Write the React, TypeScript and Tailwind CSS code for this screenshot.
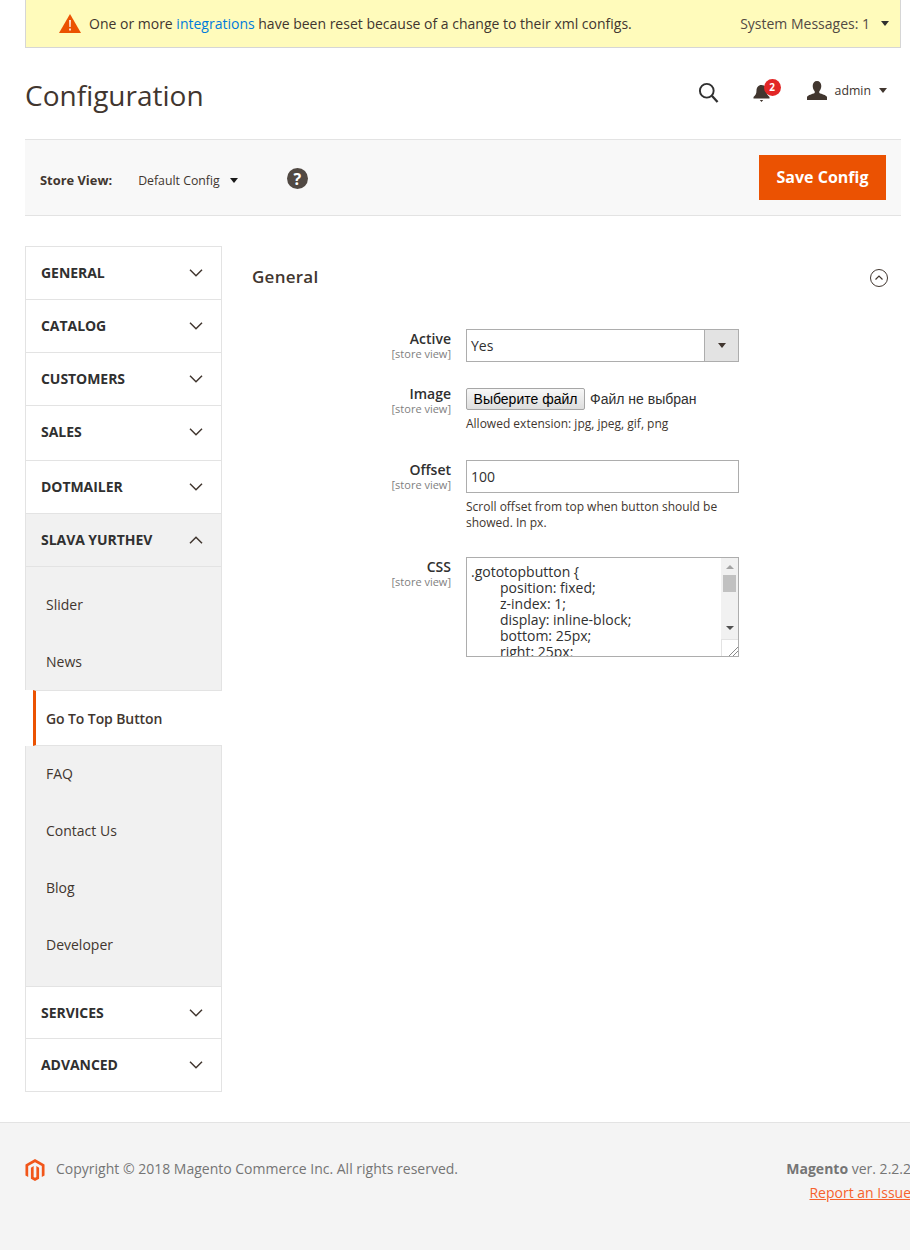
import React from 'react';

const font = "font-['Open_Sans',sans-serif]";

function Chevron({ up = false }: { up?: boolean }) {
  return (
    <svg width="14" height="8" viewBox="0 0 14 8" fill="none" stroke="#41362f" strokeWidth="1.5">
      <path d={up ? 'M1 7.3 7 1.3l6 6' : 'M1 .7l6 6 6-6'} />
    </svg>
  );
}

function Caret({ color = '#41362f' }: { color?: string }) {
  return (
    <svg width="8" height="5" viewBox="0 0 8 5">
      <path d="M0 0h8L4 5z" fill={color} />
    </svg>
  );
}

function NavSection({ title, h, open = false }: { title: string; h: string; open?: boolean }) {
  return (
    <div className={`flex items-center justify-between border-b border-[#e3e3e3] pl-[15px] pr-[18px] ${h} ${open ? 'bg-[#f1f1f1]' : 'bg-white'}`}>
      <span className="mb-[2px] text-[14px] font-bold tracking-[-0.05px] text-[#303030]">{title}</span>
      <Chevron up={open} />
    </div>
  );
}

function SubItem({ label, h }: { label: string; h: string }) {
  return <div className={`flex items-center pl-[20px] text-[14px] text-[#41362f] ${h}`}>{label}</div>;
}

function FieldLabel({ label, className = 'pt-px' }: { label: string; className?: string }) {
  return (
    <div className={`w-[440px] shrink-0 pr-[15px] text-right ${className}`}>
      <div className="text-[14px] font-semibold leading-[18px] text-[#303030]">{label}</div>
      <div className="text-[11px] leading-[12px] text-[#808080]">[store view]</div>
    </div>
  );
}

function Sidebar() {
  return (
    <aside className="w-[197px] shrink-0 border-x border-t border-[#e3e3e3]">
      <NavSection title="GENERAL" h="h-[53px]" />
      <NavSection title="CATALOG" h="h-[53px]" />
      <NavSection title="CUSTOMERS" h="h-[53px]" />
      <NavSection title="SALES" h="h-[55px] pb-[2px]" />
      <NavSection title="DOTMAILER" h="h-[53px]" />
      <NavSection title="SLAVA YURTHEV" h="h-[53px]" open />
      <div className="bg-[#f1f1f1] pt-[9px]">
        <SubItem label="Slider" h="h-[57px]" />
        <SubItem label="News" h="h-[57px]" />
        <div className="-mx-px bg-white pl-[8px]">
          <div className="flex h-[56px] items-center border-y border-l-[3px] border-[#e3e3e3] border-l-[#eb5202] pl-[10px] text-[14px] font-semibold tracking-[-0.1px] text-[#41362f]">
            Go To Top Button
          </div>
        </div>
        <div className="pb-[13px]">
          <SubItem label="FAQ" h="h-[55px]" />
          <SubItem label="Contact Us" h="h-[58px]" />
          <SubItem label="Blog" h="h-[57px]" />
          <SubItem label="Developer" h="h-[57px]" />
        </div>
      </div>
      <div className="border-t border-[#e3e3e3]">
        <NavSection title="SERVICES" h="h-[52px] pt-[1px]" />
        <NavSection title="ADVANCED" h="h-[53px]" />
      </div>
    </aside>
  );
}

function ConfigForm() {
  return (
    <section className="min-w-0 flex-1">
      <div className="flex items-start justify-between pt-[19px] pl-[30px] pr-[13px]">
        <h2 className="text-[17px] font-semibold leading-[23px] tracking-[0.25px] text-[#41362f]">General</h2>
        <svg width="18" height="18" viewBox="0 0 18 18" fill="none" stroke="#41362f" strokeWidth="1" className="mt-[4px]">
          <circle cx="9" cy="9" r="8.5" />
          <path d="M5.500 10.500l3.500-3.500 3.500 3.500" strokeWidth="1.2" />
        </svg>
      </div>

      <div className="mt-[41px] ml-[-196px]">
        <div className="flex">
          <FieldLabel label="Active" />
          <div className="flex h-[33px] w-[273px] items-stretch border border-[#adadad] bg-white">
            <span className="flex-1 pl-[4px] text-[14px] leading-[31px] text-[#303030]">Yes</span>
            <span className="flex w-[34px] items-center justify-center border-l border-[#adadad] bg-[#e3e3e3]">
              <Caret />
            </span>
          </div>
        </div>

        <div className="mt-[26px] flex">
          <FieldLabel label="Image" className="-mt-[3px] h-[22px]" />
          <div className="w-[273px]">
            <div className="flex h-[22px] items-center font-['Liberation_Sans',sans-serif] text-[14px]">
              <button className="h-[22px] w-[119px] rounded-[2px] border border-[#a6a6a6] bg-gradient-to-b from-[#f7f7f7] to-[#dedede] text-center text-[14px] leading-[20px] text-black">
                Выберите файл
              </button>
              <span className="ml-[5px] text-[#303030]">Файл не выбран</span>
            </div>
            <p className="mt-[6px] text-[12px] leading-[16px] text-[#41362f]">Allowed extension: jpg, jpeg, gif, png</p>
          </div>
        </div>

        <div className="mt-[28px] flex">
          <FieldLabel label="Offset" />
          <div className="w-[273px]">
            <div className="h-[33px] border border-[#adadad] bg-white pl-[4px] text-[14px] leading-[31px] text-[#303030]">100</div>
            <p className="mt-[6px] text-[12px] leading-[16px] text-[#41362f]">Scroll offset from top when button should be showed. In px.</p>
          </div>
        </div>

        <div className="mt-[26px] flex">
          <FieldLabel label="CSS" />
          <div className="flex h-[100px] w-[273px] overflow-hidden border border-[#adadad] bg-white">
            <div className="flex-1 overflow-hidden pt-[6px] pl-[4px] text-[14px] leading-[16px] whitespace-nowrap text-[#303030]">
              <div>{'.gototopbutton {'}</div>
              <div className="pl-[29px]">
                <div>position: fixed;</div>
                <div>z-index: 1;</div>
                <div>display: inline-block;</div>
                <div>bottom: 25px;</div>
                <div>right: 25px;</div>
              </div>
            </div>
            <div className="flex w-[17px] flex-col">
              <div className="flex flex-1 flex-col items-center bg-[#f1f1f1]">
                <svg className="mt-[7px]" width="8" height="4" viewBox="0 0 8 4"><path d="M0 4h8L4 0z" fill="#a3a3a3" /></svg>
                <div className="mt-[6px] h-[17px] w-[13px] bg-[#c1c1c1]" />
                <svg className="mt-auto mb-[9px]" width="8" height="4" viewBox="0 0 8 4"><path d="M0 0h8L4 4z" fill="#505050" /></svg>
              </div>
              <div className="flex h-[17px] items-end justify-end border-t border-l border-[#e3e3e3] bg-white">
                <svg width="10" height="10" viewBox="0 0 10 10" stroke="#8a8a8a" strokeWidth="1"><path d="M1 10 10 1M5 10l5-5" /></svg>
              </div>
            </div>
          </div>
        </div>
      </div>
    </section>
  );
}

export default function App() {
  return (
    <div className={`h-[1250px] w-[910px] overflow-hidden bg-white ${font} text-[#41362f]`}>
      <div className="mr-[9px] ml-[25px]">
        {/* System message */}
        <div className="flex h-[48px] items-center justify-between border-x border-b border-[#d6d6d6] bg-[#fffbbb] pr-[11px] pl-[33px] text-[14px] text-[#41362f]">
          <div className="flex items-center">
            <svg width="22" height="19" viewBox="0 0 22 19" className="mb-[1px]">
              <path d="M11 0 22 19H0z" fill="#eb5202" />
              <path d="M10.200 6h1.600l-.2 7h-1.200zM10.200 14.500h1.600v2h-1.600z" fill="#fff" />
            </svg>
            <span className="ml-[8px]">
              One or more <span className="text-[#007bdb]">integrations</span> have been reset because of a change to their xml configs.
            </span>
          </div>
          <div className="flex items-center gap-[11px] text-[#514943]">
            <span>System Messages: 1</span>
            <Caret color="#303030" />
          </div>
        </div>

        {/* Page header */}
        <header className="flex h-[91px] items-center justify-between pr-[14px]">
          <h1 className="pt-[2px] text-[28px] font-normal leading-[38px] text-[#41362f]">Configuration</h1>
          <div className="mb-[6px] flex items-center">
            <svg width="21" height="21" viewBox="0 0 22 22" fill="none" stroke="#303030" strokeWidth="2" className="mt-[3px]">
              <circle cx="9.2" cy="9.2" r="7.2" />
              <path d="m14.5 14.5 6 6.5" strokeWidth="2.4" />
            </svg>
            <div className="relative mt-[3px] ml-[34px] h-[20px] w-[18px]">
              <svg width="17" height="19" viewBox="0 0 17 19" className="mt-[2px]">
                <path d="M8.5 1c3.3 0 5 2.5 5 5.5 0 3.5 1.2 5 3 6.5v1.500H.5V13c1.800-1.500 3-3 3-6.500C3.500 3.500 5.200 1 8.500 1zM6.800 16h3.400L8.500 18z" fill="#41362f" />
              </svg>
              <span className="absolute top-[-3px] left-[11px] flex h-[17px] w-[17px] items-center justify-center rounded-full bg-[#e22626] text-[10px] font-bold text-white">2</span>
            </div>
            <div className="ml-[36px] flex items-center">
              <svg width="20" height="19" viewBox="0 0 20 19">
                <path d="M10 0c2.700 0 4.300 2 4.300 5 0 2.200-.9 4-2 5.200v1.800c2.500 1 6.700 2 7.700 4v3H0v-3c1-2 5.200-3 7.700-4v-1.800C6.600 9 5.700 7.200 5.700 5 5.700 2 7.300 0 10 0z" fill="#41362f" />
              </svg>
              <span className="mt-[2px] ml-[8px] text-[12.300px] text-[#41362f]">admin</span>
              <span className="ml-[8px]"><Caret /></span>
            </div>
          </div>
        </header>

        {/* Store view toolbar */}
        <div className="flex h-[77px] items-center justify-between border-y border-[#e3e3e3] bg-[#f8f8f8] pr-[15px] pl-[15px]">
          <div className="flex items-center">
            <span className="mt-[7px] text-[12.900px] font-bold text-[#41362f]">Store View:</span>
            <span className="mt-[7px] ml-[26px] text-[12.300px] text-[#41362f]">Default Config</span>
            <span className="mt-[7px] ml-[10px]"><Caret color="#1a1a1a" /></span>
            <span className="mt-[3px] ml-[49px] flex h-[21px] w-[21px] items-center justify-center rounded-full bg-[#514943] text-[16px] font-bold leading-none text-white">?</span>
          </div>
          <button className="h-[45px] w-[127px] bg-[#eb5202] pb-[2px] text-[16px] font-bold text-white">Save Config</button>
        </div>

        {/* Main */}
        <div className="mt-[30px] flex">
          <Sidebar />
          <ConfigForm />
        </div>
      </div>

      {/* Footer */}
      <footer className="mt-[30px] h-[128px] w-[939px] border-t border-[#e3e3e3] bg-[#f4f4f4] pt-[35px] pl-[25px] pr-[28px]">
        <div className="flex justify-between text-[14px] text-[#757575]">
          <div className="flex items-start">
            <svg width="22" height="24" viewBox="0 0 24 24" className="-ml-[1px]">
              <path d="M12 24l-4.455-2.572v-12l2.97-1.715v12.001L12 20.57l1.485-.856V7.713l2.97 1.715v12L12 24zM22.391 6v12l-2.969 1.714V7.713L12 3.43 4.574 7.713v12L1.609 18V6L12 0l10.391 6z" fill="#f1561a" />
            </svg>
            <span className="ml-[10px] leading-[22px]">Copyright © 2018 Magento Commerce Inc. All rights reserved.</span>
          </div>
          <div className="text-right leading-[22px]">
            <div><span className="font-bold">Magento</span> ver. 2.2.2</div>
            <div className="mt-[2px] text-[#f6622d] underline">Report an Issue</div>
          </div>
        </div>
      </footer>
    </div>
  );
}
